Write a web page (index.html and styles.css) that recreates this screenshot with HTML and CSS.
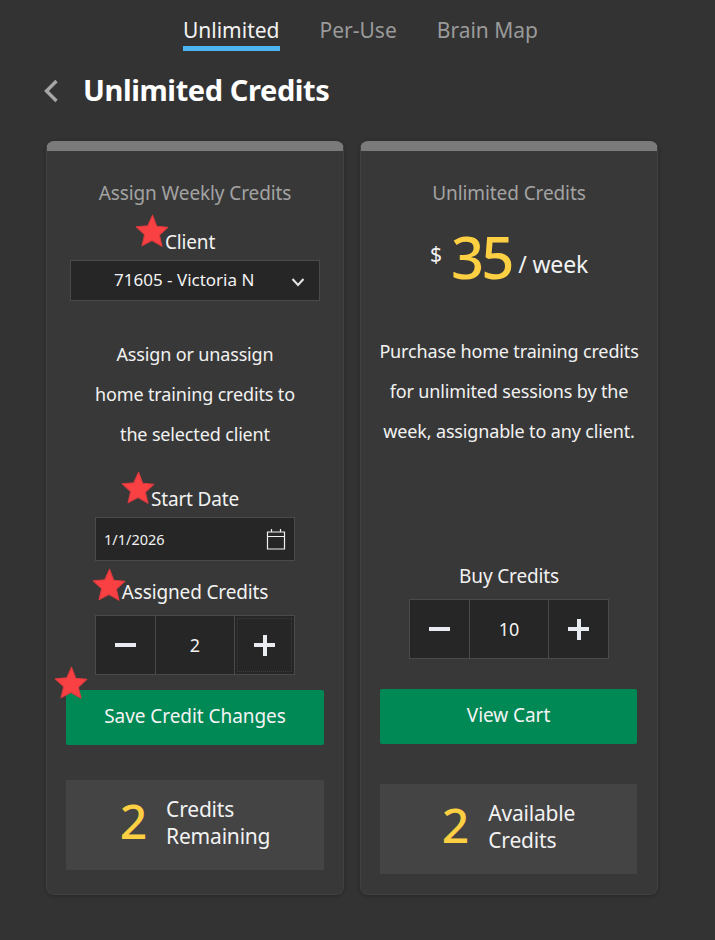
FILE: index.html
```html
<!DOCTYPE html>
<html lang="en">
<head>
    <meta charset="UTF-8">
    <meta name="viewport" content="width=device-width, initial-scale=1.0">
    <title>Unlimited Credits</title>
    <link rel="stylesheet" href="styles.css">
</head>
<body>
    <!-- Tabs -->
    <nav class="tabs">
        <a class="tab active">Unlimited</a>
        <a class="tab">Per-Use</a>
        <a class="tab">Brain Map</a>
    </nav>

    <div class="page-title">
        <svg class="back" viewBox="0 0 16 24" width="16" height="24"><path d="M13.5 2 L3.5 12 L13.5 22" fill="none" stroke="#a6a6a6" stroke-width="3.4"/></svg>
        <h1>Unlimited Credits</h1>
    </div>

    <div class="cards">
        <!-- Assign -->
        <section class="card">
            <h2>Assign Weekly Credits</h2>
            <label class="field-label client-label">
                <svg class="star" viewBox="0 0 36 36"><path d="M18.5 3 L22.5 13.5 L33 14.5 L25 22 L27.5 32.5 L18 27 L8.5 32 L11 21.5 L3 14 L14 13 Z"/></svg>
                Client
            </label>
            <div class="select">
                <span>71605 - Victoria N</span>
                <svg class="caret" viewBox="0 0 14 10" width="14" height="10"><path d="M1.5 2 L7 8 L12.5 2" fill="none" stroke="#e6e6e6" stroke-width="2"/></svg>
            </div>
            <p class="blurb assign-blurb">Assign or unassign<br>home training credits to<br>the selected client</p>
            <label class="field-label date-label">
                <svg class="star" viewBox="0 0 36 36"><path d="M18.5 3 L22.5 13.5 L33 14.5 L25 22 L27.5 32.5 L18 27 L8.5 32 L11 21.5 L3 14 L14 13 Z"/></svg>
                Start Date
            </label>
            <div class="date-input">
                <span>1/1/2026</span>
                <svg viewBox="0 0 20 22" width="20" height="22"><path d="M1.5 4 H18.5 V21 H1.5 Z M1.5 8.5 H18.5 M5.5 1 V4 M14.5 1 V4" fill="none" stroke="#f0f0f0" stroke-width="1.2"/></svg>
            </div>
            <label class="field-label assigned-label">
                <svg class="star" viewBox="0 0 36 36"><path d="M18.5 3 L22.5 13.5 L33 14.5 L25 22 L27.5 32.5 L18 27 L8.5 32 L11 21.5 L3 14 L14 13 Z"/></svg>
                Assigned Credits
            </label>
            <div class="stepper">
                <div class="step"><span class="minus"></span></div>
                <div class="step-value">2</div>
                <div class="step focus"><span class="plus"></span></div>
            </div>
            <div class="btn-wrap save-wrap">
                <svg class="star" viewBox="0 0 36 36"><path d="M18.5 3 L22.5 13.5 L33 14.5 L25 22 L27.5 32.5 L18 27 L8.5 32 L11 21.5 L3 14 L14 13 Z"/></svg>
                <button class="btn">Save Credit Changes</button>
            </div>
            <div class="stat stat-left">
                <span class="stat-num">2</span>
                <span class="stat-text">Credits<br>Remaining</span>
            </div>
        </section>

        <!-- Purchase -->
        <section class="card">
            <h2>Unlimited Credits</h2>
            <div class="price">
                <span class="dollar">$</span>
                <span class="amount">35</span>
                <span class="per">/ week</span>
            </div>
            <p class="blurb buy-blurb">Purchase home training credits<br>for unlimited sessions by the<br>week, assignable to any client.</p>
            <label class="field-label buy-label">Buy Credits</label>
            <div class="stepper">
                <div class="step"><span class="minus"></span></div>
                <div class="step-value">10</div>
                <div class="step"><span class="plus"></span></div>
            </div>
            <div class="btn-wrap cart-wrap">
                <button class="btn">View Cart</button>
            </div>
            <div class="stat stat-right">
                <span class="stat-num">2</span>
                <span class="stat-text">Available<br>Credits</span>
            </div>
        </section>
    </div>
</body>
</html>
```

FILE: styles.css
```css
body {
    font-family: 'Noto Sans', 'Open Sans', sans-serif;
    margin: 0;
    padding: 0;
    background: #333333;
    color: #f2f2f2;
    height: 940px;
    overflow: hidden;
}

.tabs {
    display: flex;
    justify-content: center;
    gap: 40px;
    padding: 15px 0 0 6px;
}

.tab {
    font-size: 21px;
    line-height: 31px;
    height: 31px;
    color: #9a9a9a;
    border-bottom: 5px solid transparent;
}

.tab.active {
    color: #f2f2f2;
    border-bottom-color: #4db4f2;
}

.page-title {
    display: flex;
    align-items: center;
    gap: 24px;
    padding: 18px 0 0 43px;
    height: 42px;
}

.back {
    flex: none;
    margin-top: 2px;
}

h1 {
    margin: 0;
    font-size: 29px;
    line-height: 40px;
    font-weight: 700;
    color: #ffffff;
    letter-spacing: -0.4px;
    white-space: nowrap;
}

.cards {
    display: flex;
    gap: 16px;
    padding: 30px 0 0 46px;
}

.card {
    width: 298px;
    height: 754px;
    box-sizing: border-box;
    background: #383838;
    border: 1px solid #414141;
    border-top: 10px solid #7a7a7a;
    border-radius: 8px;
    box-shadow: 0 1px 4px rgba(0, 0, 0, 0.25);
    padding: 0 19px;
    display: flex;
    flex-direction: column;
    align-items: center;
    text-align: center;
}

h2 {
    margin: 29px 0 0;
    font-size: 19px;
    line-height: 26px;
    font-weight: 400;
    color: #a3a3a3;
    letter-spacing: -0.1px;
}

.field-label {
    display: block;
    position: relative;
    font-size: 19px;
    line-height: 26px;
    color: #f2f2f2;
    letter-spacing: -0.15px;
}

.star {
    position: absolute;
    width: 38px;
    height: 38px;
    fill: #f94144;
    stroke: #d93a3d;
    stroke-width: 1;
    stroke-linejoin: round;
}

.field-label .star {
    right: 100%;
    top: -17px;
    margin-right: -6px;
}

.client-label {
    margin-top: 23px;
    padding-right: 10px;
}

.assigned-label .star {
    top: -13px;
}

.select {
    width: 250px;
    height: 41px;
    margin-top: 5px;
    box-sizing: border-box;
    background: #262626;
    border: 1px solid #4a4a4a;
    display: flex;
    align-items: center;
    justify-content: space-between;
    padding: 0 14px 2px 43px;
    font-size: 17px;
}

.caret {
    margin-top: 4px;
}

.blurb {
    margin: 0;
    font-size: 18px;
    line-height: 40px;
    letter-spacing: -0.15px;
    white-space: nowrap;
}

.assign-blurb {
    margin-top: 33px;
}

.date-label {
    margin-top: 32px;
}

.date-input {
    width: 200px;
    height: 44px;
    margin-top: 5px;
    box-sizing: border-box;
    background: #262626;
    border: 1px solid #4a4a4a;
    display: flex;
    align-items: center;
    justify-content: space-between;
    padding: 0 8px;
    font-size: 14.5px;
}

.assigned-label {
    margin-top: 18px;
}

.stepper {
    width: 200px;
    height: 60px;
    box-sizing: border-box;
    margin-top: 10px;
    background: #262626;
    border: 1px solid #4a4a4a;
    display: flex;
}

.step {
    width: 59px;
    flex: none;
    display: flex;
    align-items: center;
    justify-content: center;
}

.step.focus {
    outline: 1px dotted #3d3d3d;
    outline-offset: -3px;
}

.step-value {
    flex: 1;
    border-left: 1px solid #4a4a4a;
    border-right: 1px solid #4a4a4a;
    display: flex;
    align-items: center;
    justify-content: center;
    font-size: 18px;
}

.minus,
.plus {
    display: block;
    position: relative;
    width: 21px;
    height: 4px;
    background: #e8ecf0;
}

.plus::after {
    content: "";
    position: absolute;
    left: 8.5px;
    top: -8.5px;
    width: 4px;
    height: 21px;
    background: #e8ecf0;
}

.btn-wrap {
    position: relative;
    width: 100%;
}

.save-wrap {
    margin-top: 15px;
}

.save-wrap .star {
    left: -14px;
    top: -26px;
    z-index: 1;
}

.btn {
    display: block;
    width: 100%;
    height: 55px;
    padding: 0 0 3px;
    background: #008855;
    color: #f4f4f4;
    border: none;
    border-radius: 2px;
    font-family: inherit;
    font-size: 19px;
    letter-spacing: -0.05px;
}

.stat {
    width: 100%;
    height: 90px;
    box-sizing: border-box;
    padding-bottom: 4px;
    background: #444444;
    display: flex;
    align-items: center;
    justify-content: center;
    gap: 19px;
    text-align: left;
}

.stat-left {
    margin-top: 35px;
}

.stat-num {
    font-size: 48px;
    line-height: 50px;
    font-weight: 500;
    color: #fdd043;
    margin-bottom: 4px;
}

.stat-text {
    font-size: 21px;
    line-height: 27px;
    letter-spacing: -0.2px;
}

/* right card */
.price {
    margin-top: 21px;
    height: 60px;
    display: flex;
    justify-content: center;
    align-items: flex-start;
    gap: 9px;
}

.dollar {
    font-size: 21px;
    line-height: 30px;
    margin-top: 12px;
}

.amount {
    font-size: 58px;
    line-height: 60px;
    font-weight: 500;
    letter-spacing: -3px;
    color: #fdd043;
}

.per {
    font-size: 23px;
    line-height: 30px;
    margin-top: 22px;
    margin-left: -2px;
    letter-spacing: -0.2px;
}

.buy-blurb {
    margin-top: 44px;
}

.buy-label {
    margin-top: 112px;
}

.cart-wrap {
    margin-top: 30px;
    width: 257px;
    align-self: flex-start;
}

.stat-right {
    margin-top: 40px;
    width: 257px;
    align-self: flex-start;
}
```
